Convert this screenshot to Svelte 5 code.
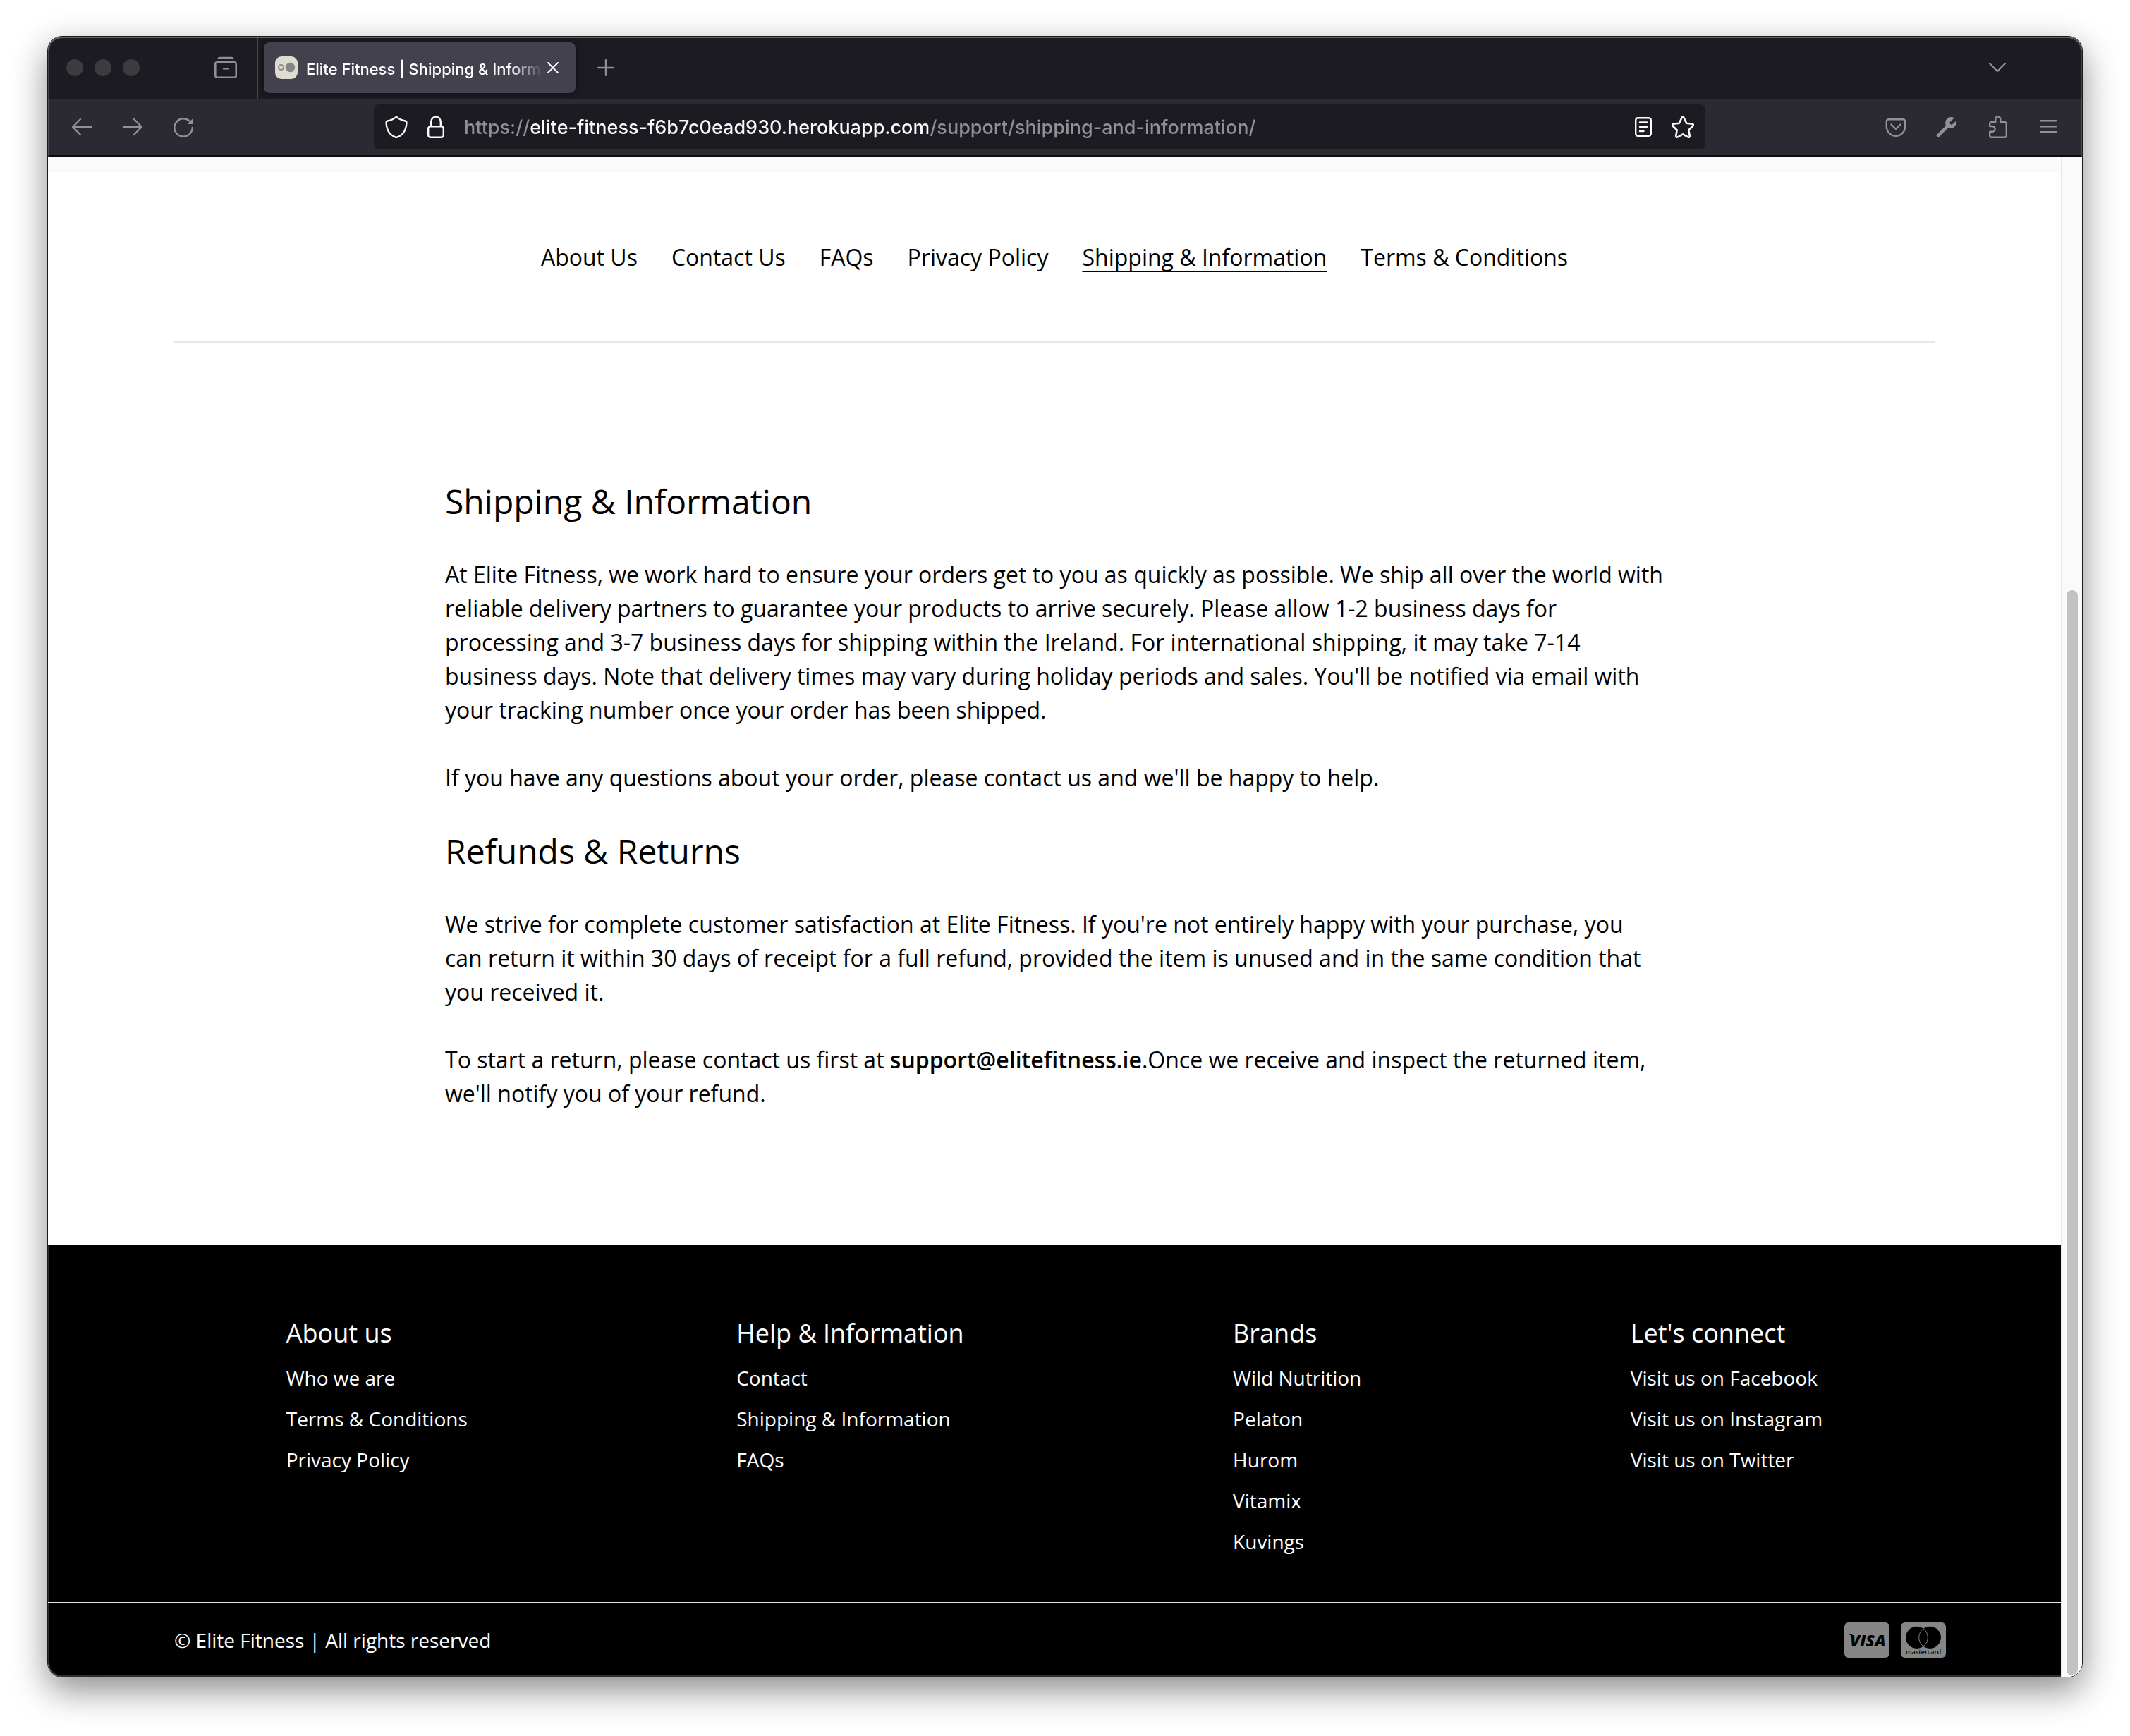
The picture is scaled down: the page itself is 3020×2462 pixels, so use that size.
<script>
  const tabTitle = 'Elite Fitness | Shipping & Information';
  let url = $state('https://elite-fitness-f6b7c0ead930.herokuapp.com/support/shipping-and-information/');

  const supportLinks = [
    { label: 'About Us' },
    { label: 'Contact Us' },
    { label: 'FAQs' },
    { label: 'Privacy Policy' },
    { label: 'Shipping & Information', current: true },
    { label: 'Terms & Conditions' },
  ];

  const footerColumns = [
    { title: 'About us', links: ['Who we are', 'Terms & Conditions', 'Privacy Policy'] },
    { title: 'Help & Information', links: ['Contact', 'Shipping & Information', 'FAQs'] },
    { title: 'Brands', links: ['Wild Nutrition', 'Pelaton', 'Hurom', 'Vitamix', 'Kuvings'] },
    {
      title: "Let's connect",
      links: ['Visit us on Facebook', 'Visit us on Instagram', 'Visit us on Twitter'],
    },
  ];
</script>

<div class="desktop">
  <div class="window">
    <header class="tabstrip">
      <div class="lights"><span></span><span></span><span></span></div>
      <button class="icon archive" aria-label="Recently closed">
        <svg viewBox="0 0 32 32" fill="none" stroke="currentColor" stroke-width="2.6">
          <rect x="1.3" y="8.3" width="29.4" height="21.4" rx="2.5" />
          <path d="M5.3 4.2C5.5 2.6 6.4 2 8 2h16c1.6 0 2.500.6 2.700 2.200M12 17.300h8" />
        </svg>
      </button>
      <div class="divider"></div>
      <div class="tab">
        <svg class="favicon" viewBox="0 0 32 32">
          <rect width="32" height="32" rx="9" fill="#dedbcf" />
          <circle cx="8.5" cy="15.5" r="3.5" fill="none" stroke="#8c8c8a" stroke-width="2" />
          <circle cx="21.5" cy="15.5" r="6.7" fill="#868686" />
        </svg>
        <span class="title">{tabTitle}</span>
        <button class="close" aria-label="Close tab">
          <svg viewBox="0 0 16 16" fill="none" stroke="currentColor" stroke-width="1.8" stroke-linecap="round">
            <path d="M1 1l14 14M15 1L1 15" />
          </svg>
        </button>
      </div>
      <button class="newtab" aria-label="New tab">
        <svg viewBox="0 0 24 24" fill="none" stroke="currentColor" stroke-width="2.4" stroke-linecap="round">
          <path d="M12 1.2v21.6M1.2 12h21.6" />
        </svg>
      </button>
      <button class="icon alltabs" aria-label="List all tabs">
        <svg viewBox="0 0 32 32" fill="none" stroke="currentColor" stroke-width="2.4" stroke-linecap="round" stroke-linejoin="round">
          <path d="M5 10l11 11 11-11" />
        </svg>
      </button>
    </header>

    <div class="toolbar">
      <div class="group">
        <button class="icon" aria-label="Back">
          <svg viewBox="0 0 32 32" fill="none" stroke="currentColor" stroke-width="2.4" stroke-linecap="round" stroke-linejoin="round">
            <path d="M29 16H3.2M14 5L3.2 16 14 27" />
          </svg>
        </button>
        <button class="icon" aria-label="Forward">
          <svg viewBox="0 0 32 32" fill="none" stroke="currentColor" stroke-width="2.4" stroke-linecap="round" stroke-linejoin="round">
            <path d="M3 16h25.8M18 5l10.8 11L18 27" />
          </svg>
        </button>
        <button class="icon" aria-label="Reload">
          <svg viewBox="0 0 32 32" fill="none" stroke="currentColor" stroke-width="2.4">
            <path d="M28.7 17A12.7 12.7 0 1 1 24.6 7.6" stroke-linecap="round" />
            <path d="M30 3.5v8.500h-8.500z" fill="currentColor" stroke="none" />
          </svg>
        </button>
      </div>

      <div class="urlbar">
        <svg class="glyph" viewBox="0 0 32 32" fill="none" stroke="currentColor" stroke-width="2.4" stroke-linejoin="round">
          <path d="M16 1.5C12.5 5 7.5 6.8 3.3 7.5 1.8 7.8 1.5 8.8 1.6 10.5 2.2 20.5 6.5 27.5 14.6 30.5q1.4.6 2.8 0C25.5 27.5 29.8 20.5 30.4 10.500c.1-1.700-.2-2.700-1.700-3C24.500 6.800 19.500 5 16 1.500z" />
        </svg>
        <svg class="glyph" viewBox="0 0 32 32" fill="none" stroke="currentColor" stroke-width="2.4">
          <rect x="5.2" y="15.2" width="21.6" height="15.6" rx="3" />
          <path d="M9.2 15V8.8a6.8 7.3 0 0 1 13.6 0V15" />
        </svg>
        <input type="text" aria-label="Address" bind:value={url} />
        <button class="icon" aria-label="Reader view">
          <svg viewBox="0 0 32 32" fill="none" stroke="currentColor" stroke-width="2.4" stroke-linecap="round">
            <rect x="5.2" y="3.2" width="21.6" height="25.6" rx="3.2" />
            <path d="M11 9.5h10M11 15.7h10M11 22h5.5" />
          </svg>
        </button>
        <button class="icon" aria-label="Bookmark this page">
          <svg viewBox="0 0 32 32" fill="none" stroke="currentColor" stroke-width="2.6" stroke-linejoin="round">
            <path d="M14.5 3q1.5-2.6 3 0l3.7 7.7 8.1 1.1q2.800.6 1 2.700l-6 6 1.500 8.200q.2 2.800-2.500 1.700L16 26.400l-7.300 4q-2.700 1.100-2.500-1.700l1.500-8.200-6-6q-1.800-2.100 1-2.700l8.100-1.100z" />
          </svg>
        </button>
      </div>

      <div class="group">
        <button class="icon" aria-label="Save to Pocket">
          <svg viewBox="0 0 32 32" fill="none" stroke="currentColor" stroke-width="2.4" stroke-linecap="round" stroke-linejoin="round">
            <path d="M5.5 5.2h21a2.700 2.700 0 0 1 2.700 2.700V15.500a13.200 13.200 0 0 1-26.400 0V7.900a2.700 2.700 0 0 1 2.700-2.700zM9.500 12.500L16 19l6.500-6.500" />
          </svg>
        </button>
        <button class="icon" aria-label="Developer tools">
          <svg viewBox="0 0 32 32" fill="currentColor">
            <path d="M24.500 2.300C18.500 1 13.700 5.500 14.300 11.500c.1 1 .3 1.900.6 2.700L2.400 26.700c-2.200 2.200 1 5.300 3.200 3.200L18.200 17.300c1 .4 2 .6 3.100.6 5.700 0 9.600-5 8.700-11L24.500 12c-1 .9-2.400.9-3.300 0s-.9-2.300 0-3.300L26.800 3.200c-.7-.4-1.500-.7-2.300-.9z" />
          </svg>
        </button>
        <button class="icon" aria-label="Extensions">
          <svg viewBox="0 0 32 32" fill="none" stroke="currentColor" stroke-width="2.4" stroke-linejoin="round">
            <path d="M5.200 15V11.500A2.300 2.300 0 0 1 7.500 9.200H13.200V4.800a3.500 3.500 0 0 1 7 0V9.200H26.500A2.300 2.300 0 0 1 28.800 11.500V28.500A2.300 2.300 0 0 1 26.500 30.800H7.500A2.300 2.300 0 0 1 5.200 28.500V22.800H8.700a3.900 3.900 0 0 0 0-7.800z" />
          </svg>
        </button>
        <button class="icon" aria-label="Open application menu">
          <svg viewBox="0 0 32 32" fill="none" stroke="currentColor" stroke-width="2.4" stroke-linecap="round">
            <path d="M5 7.200h22M5 15.200h22M5 23.200h22" />
          </svg>
        </button>
      </div>
    </div>

    <div class="viewport">
      <div class="page">
        <div class="strip"></div>
        <main>
          <nav class="support">
            {#each supportLinks as link}
              <a href="#support" class:current={link.current}>{link.label}</a>
            {/each}
          </nav>
          <article>
            <h2>Shipping &amp; Information</h2>
            <p>
              At Elite Fitness, we work hard to ensure your orders get to you as quickly as possible. We
              ship all over the world with reliable delivery partners to guarantee your products to arrive
              securely. Please allow 1-2 business days for processing and 3-7 business days for shipping
              within the Ireland. For international shipping, it may take 7-14 business days. Note that
              delivery times may vary during holiday periods and sales. You'll be notified via email with
              your tracking number once your order has been shipped.
            </p>
            <p>If you have any questions about your order, please contact us and we'll be happy to help.</p>
            <h2>Refunds &amp; Returns</h2>
            <p>
              We strive for complete customer satisfaction at Elite Fitness. If you're not entirely happy
              with your purchase, you can return it within 30 days of receipt for a full refund, provided
              the item is unused and in the same condition that you received it.
            </p>
            <p>
              To start a return, please contact us first at
              <a href="mailto:support@elitefitness.ie">support@elitefitness.ie</a>.Once we receive and
              inspect the returned item, we'll notify you of your refund.
            </p>
          </article>
        </main>

        <footer>
          <div class="columns">
            {#each footerColumns as column}
              <section>
                <h3>{column.title}</h3>
                <ul>
                  {#each column.links as link}
                    <li><a href="#footer">{link}</a></li>
                  {/each}
                </ul>
              </section>
            {/each}
          </div>
          <div class="legal">
            <div class="legal-inner">
              <span>© Elite Fitness | All rights reserved</span>
              <div class="cards">
                <svg viewBox="0 0 64 50" role="img" aria-label="Visa">
                  <rect width="64" height="50" rx="6" fill="#868686" />
                  <path d="M4 16.200h7.500l-1 3Q8 17.200 4 16.800z" />
                  <text class="visa" x="8" y="34">VISA</text>
                </svg>
                <svg viewBox="0 0 64 50" role="img" aria-label="Mastercard">
                  <rect width="64" height="50" rx="6" fill="#868686" />
                  <circle cx="22.700" cy="21.300" r="15.600" />
                  <circle cx="41.300" cy="21.300" r="15.600" />
                  <path d="M32 8.800a15.600 15.600 0 0 1 0 25a15.600 15.600 0 0 1 0-25z" fill="none" stroke="#868686" />
                  <text class="mc" x="32" y="45" text-anchor="middle">mastercard</text>
                </svg>
              </div>
            </div>
          </div>
        </footer>
      </div>
      <div class="scrollbar"><div class="thumb"></div></div>
    </div>
  </div>
</div>

<style>
  :global(body) {
    margin: 0;
    background: #fff;
  }
  .desktop {
    min-height: 100vh;
    box-sizing: border-box;
    padding: 51px 67px 83px;
    display: flex;
    font-family: 'Open Sans', sans-serif;
    color: #000;
  }
  .window {
    flex: 1;
    min-width: 0;
    display: flex;
    flex-direction: column;
    position: relative;
    border: 1px solid #1a1a1c;
    border-radius: 21px;
    overflow: hidden;
    box-shadow: 0 18px 50px rgba(0, 0, 0, 0.46);
  }
  /* Light inner rim drawn over the window's edge */
  .window::after {
    content: '';
    position: absolute;
    inset: 0;
    border-radius: 20px;
    box-shadow:
      inset 0 0 0 2px rgba(255, 255, 255, 0.18),
      inset 0 2px 0 rgba(255, 255, 255, 0.16);
    pointer-events: none;
  }
  button {
    border: 0;
    padding: 0;
    background: none;
    color: inherit;
    display: block;
  }
  svg {
    display: block;
  }
  .icon,
  .icon svg,
  .glyph {
    width: 32px;
    height: 32px;
    flex: none;
  }

  .tabstrip {
    height: 88px;
    display: flex;
    align-items: center;
    background: #1c1b22;
    color: #8f8e96;
    font-family: Inter, sans-serif;
  }
  .lights {
    display: flex;
    gap: 16px;
    padding-left: 26px;
  }
  .lights span {
    width: 24px;
    height: 24px;
    border-radius: 50%;
    background: #3c3b40;
  }
  .archive {
    margin-left: 106px;
  }
  .divider {
    align-self: stretch;
    width: 2px;
    margin: 0 8px 0 28px;
    background: #46464c;
  }
  .tab {
    width: 442px;
    height: 72px;
    box-sizing: border-box;
    padding: 0 24px 0 16px;
    display: flex;
    align-items: center;
    border-radius: 8px;
    background: #42414d;
    color: #fff;
    box-shadow: 0 0 8px rgba(0, 0, 0, 0.6);
  }
  .favicon {
    width: 32px;
    height: 32px;
    flex: none;
  }
  .title {
    flex: 1;
    min-width: 0;
    margin: 0 6px 0 12px;
    padding-top: 4px;
    overflow: hidden;
    white-space: nowrap;
    font-size: 22px;
    line-height: 32px;
    font-weight: 500;
    mask-image: linear-gradient(to left, transparent, #000 48px);
  }
  .close,
  .close svg {
    width: 16px;
    height: 16px;
    flex: none;
  }
  .newtab {
    margin-left: 31px;
  }
  .newtab svg {
    width: 24px;
    height: 24px;
  }
  .alltabs {
    margin-left: auto;
    margin-right: 104px;
  }

  .toolbar {
    height: 80px;
    padding: 0 32px;
    display: flex;
    align-items: center;
    background: #2b2a33;
    border-bottom: 2px solid #0c0c0d;
    color: #929198;
  }
  .group {
    display: flex;
    gap: 40px;
  }
  .urlbar {
    flex: 0 1 1888px;
    min-width: 0;
    height: 64px;
    box-sizing: border-box;
    margin: 0 auto;
    padding: 0 16px;
    display: flex;
    align-items: center;
    gap: 24px;
    border-radius: 8px;
    background: #1c1b22;
    color: #fbfbfe;
  }
  input {
    flex: 1;
    min-width: 0;
    height: 48px;
    padding: 0;
    border: 0;
    outline: 0;
    font-family: Inter, sans-serif;
    font-size: 27px;
    font-weight: 500;
    color: transparent;
    /* The host name stands out from the scheme and the path */
    background: linear-gradient(to right, #8f8f94 93px, #fbfbfe 93px, #fbfbfe 658px, #8f8f94 658px);
    -webkit-background-clip: text;
    background-clip: text;
  }

  .viewport {
    flex: 1;
    display: flex;
    background: #fff;
  }
  .page {
    flex: 1;
    min-width: 0;
    display: flex;
    flex-direction: column;
  }
  .strip {
    height: 22px;
    background: #f9fafb;
  }
  main {
    width: 100%;
    max-width: 2496px;
    margin: 0 auto;
    flex: 1;
  }
  .support {
    display: flex;
    justify-content: center;
    gap: 48px;
    padding: 97px 0 95px;
    border-bottom: 2px solid #e5e7eb;
    font-size: 32px;
    line-height: 48px;
  }
  a {
    color: inherit;
    text-decoration: none;
  }
  .current {
    text-decoration: underline 1px;
    text-underline-offset: 8px;
    text-decoration-skip-ink: none;
  }
  article {
    max-width: 1728px;
    margin: 0 auto;
    padding: 193px 0 191px;
    display: flex;
    flex-direction: column;
    gap: 48px;
    font-size: 32px;
    line-height: 48px;
  }
  h2,
  h3,
  p,
  ul {
    margin: 0;
    padding: 0;
    font-weight: 400;
    list-style: none;
  }
  h2 {
    font-size: 48px;
    line-height: 64px;
  }
  article a {
    font-weight: 600;
    text-decoration: underline 1px;
    text-underline-offset: 2px;
  }

  footer {
    background: #000;
    color: #fff;
    font-size: 28px;
    line-height: 42px;
  }
  .columns {
    max-width: 2560px;
    margin: 0 auto;
    padding: 97px 0 65px;
    display: flex;
    justify-content: space-around;
  }
  h3 {
    font-size: 36px;
    line-height: 56px;
  }
  ul {
    margin-top: 14px;
    display: flex;
    flex-direction: column;
    gap: 16px;
  }
  .legal {
    border-top: 2px solid #e5e7eb;
  }
  .legal-inner {
    max-width: 2560px;
    height: 104px;
    box-sizing: border-box;
    margin: 0 auto;
    padding: 0 16px 0 32px;
    display: flex;
    align-items: center;
    justify-content: space-between;
  }
  .cards {
    display: flex;
    gap: 16px;
  }
  .cards svg {
    width: 64px;
    height: 50px;
  }
  .visa {
    font-family: 'Open Sans', sans-serif;
    font-size: 23px;
    font-weight: 800;
    font-style: italic;
  }
  .mc {
    font-family: 'Open Sans', sans-serif;
    font-size: 9px;
    font-weight: 600;
  }

  .scrollbar {
    width: 28px;
    display: grid;
    grid-template-rows: 615fr 1539fr 2px;
    justify-items: center;
    background: #fafafa;
    border-left: 2px solid #e8e8e8;
  }
  .thumb {
    grid-row: 2;
    width: 16px;
    border-radius: 8px;
    background: #c2c2c2;
  }
</style>
